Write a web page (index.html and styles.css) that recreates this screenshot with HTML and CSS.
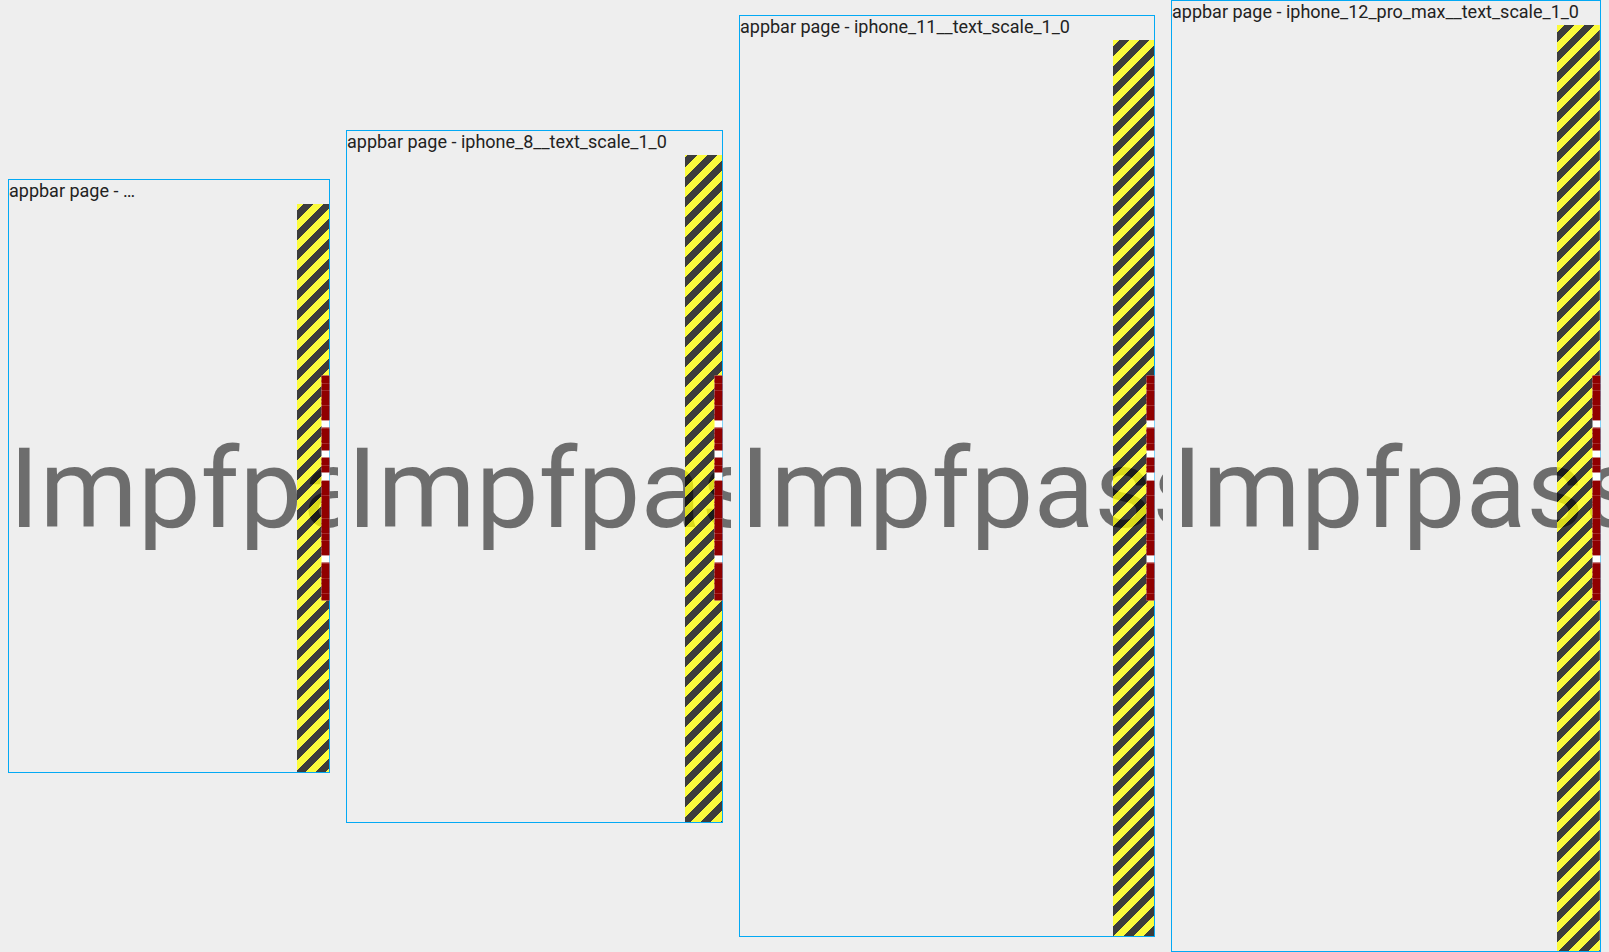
FILE: index.html
```html
<!DOCTYPE html>
<html lang="de">
<head>
<meta charset="utf-8">
<title>appbar page goldens</title>
<link rel="stylesheet" href="styles.css">
</head>
<body>
<main class="board">
  <section class="cell">
    <div class="device">
      <div class="title">appbar page - …</div>
      <div class="screen screen-se">
        <div class="page-text">Impfpass</div>
        <div class="overflow">
          <div class="label"><span class="w">RIGHT</span> <span class="w">OVERFLOWED</span> <span class="w">BY</span> <span class="w">153</span> <span class="w">PIXELS</span></div>
        </div>
      </div>
    </div>
  </section>
  <section class="cell">
    <div class="device">
      <div class="title">appbar page - iphone_8__text_scale_1_0</div>
      <div class="screen screen-8">
        <div class="page-text">Impfpass</div>
        <div class="overflow">
          <div class="label"><span class="w">RIGHT</span> <span class="w">OVERFLOWED</span> <span class="w">BY</span> <span class="w">136</span> <span class="w">PIXELS</span></div>
        </div>
      </div>
    </div>
  </section>
  <section class="cell">
    <div class="device">
      <div class="title">appbar page - iphone_11__text_scale_1_0</div>
      <div class="screen screen-11">
        <div class="page-text">Impfpass</div>
        <div class="overflow">
          <div class="label"><span class="w">RIGHT</span> <span class="w">OVERFLOWED</span> <span class="w">BY</span> <span class="w">124</span> <span class="w">PIXELS</span></div>
        </div>
      </div>
    </div>
  </section>
  <section class="cell">
    <div class="device">
      <div class="title">appbar page - iphone_12_pro_max__text_scale_1_0</div>
      <div class="screen screen-12">
        <div class="page-text">Impfpass</div>
        <div class="overflow">
          <div class="label"><span class="w">RIGHT</span> <span class="w">OVERFLOWED</span> <span class="w">BY</span> <span class="w">120</span> <span class="w">PIXELS</span></div>
        </div>
      </div>
    </div>
  </section>
</main>
</body>
</html>
```

FILE: styles.css
```css
html, body {
  margin: 0;
  padding: 0;
  height: 100%;
  overflow: hidden;
  background: #eeeeee;
}

.board {
  display: flex;
  align-items: center;
  height: 952px;
  width: 1609px;
}

.cell {
  flex: none;
  padding: 0 8px;
  overflow: hidden;
}

.device {
  border: 1px solid #03a9f4;
  display: flex;
  flex-direction: column;
  background: #eeeeee;
}

.title {
  height: 24px;
  line-height: 22px;
  font-family: Roboto, "Liberation Sans", sans-serif;
  font-size: 18px;
  color: #222222;
  white-space: nowrap;
  overflow: hidden;
}

.screen {
  position: relative;
  display: flex;
  align-items: center;
}

.screen-se { width: 320px; height: 568px; }
.screen-8 { width: 375px; height: 667px; }
.screen-11 { width: 414px; height: 896px; }
.screen-12 { width: 428px; height: 926px; }

.page-text {
  flex: none;
  font-family: Roboto, "Liberation Sans", sans-serif;
  font-size: 112px;
  font-weight: 400;
  line-height: normal;
  color: rgba(0, 0, 0, 0.54);
  white-space: nowrap;
}

.overflow {
  position: absolute;
  top: 0;
  right: 0;
  bottom: 0;
  width: 10%;
  background-image: repeating-linear-gradient(135deg,
    rgba(0, 0, 0, 0.75) 0 3.536px,
    rgba(255, 255, 0, 0.75) 3.536px 10.607px,
    rgba(0, 0, 0, 0.75) 10.607px 14.142px);
  background-size: 1000% 100%;
  background-position: right top;
  background-repeat: no-repeat;
}

.label {
  position: absolute;
  top: calc(50% - 4px);
  right: -108.5px;
  width: 225px;
  height: 8px;
  background: #ffffff;
  font-family: "Liberation Mono", monospace;
  font-size: 12.5px;
  line-height: 8px;
  color: #900000;
  white-space: nowrap;
  transform: rotate(-90deg);
}

.w {
  display: inline-block;
  vertical-align: top;
  height: 8px;
  overflow: hidden;
  background: repeating-linear-gradient(90deg, #900000 0 7px, #a52a2a 7px 7.5px);
}
```
